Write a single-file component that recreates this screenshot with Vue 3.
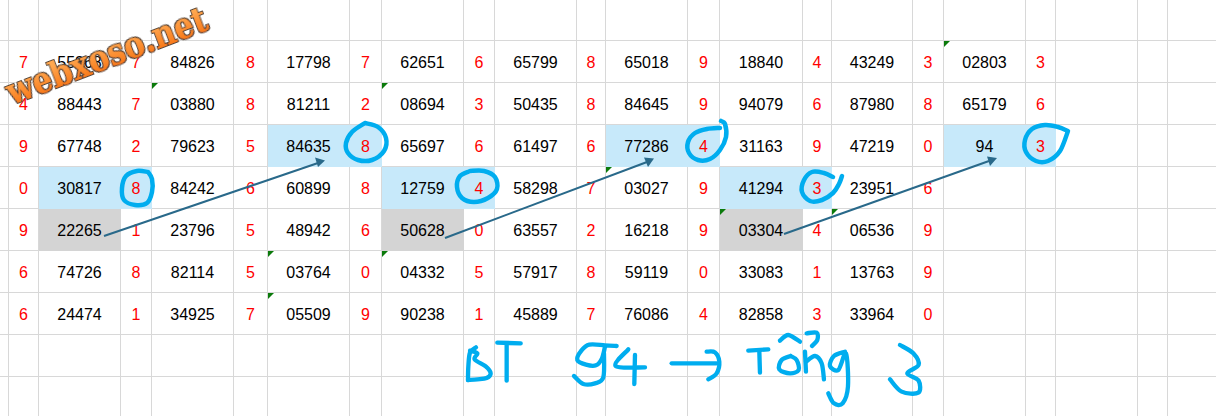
<script setup>
const widths = [9, 30, 82, 31, 82, 34, 82, 32, 82, 31, 82, 29, 82, 32, 83, 29, 81, 31, 82, 30, 82, 30]
const heights = [41, 42, 42, 42, 42, 42, 42, 42, 42, 42, 39]
const gridColumns = widths.map((w) => w + 'px').join(' ') + ' 1fr'
const gridRows = heights.map((h) => h + 'px').join(' ')

const data = [
  [],
  '7 55368 7 84826 8 17798 7 62651 6 65799 8 65018 9 18840 4 43249 3 02803 3'.split(' '),
  '4 88443 7 03880 8 81211 2 08694 3 50435 8 84645 9 94079 6 87980 8 65179 6'.split(' '),
  '9 67748 2 79623 5 84635 8 65697 6 61497 6 77286 4 31163 9 47219 0 94 3'.split(' '),
  '0 30817 8 84242 6 60899 8 12759 4 58298 7 03027 9 41294 3 23951 6'.split(' '),
  '9 22265 1 23796 5 48942 6 50628 0 63557 2 16218 9 03304 4 06536 9'.split(' '),
  '6 74726 8 82114 5 03764 0 04332 5 57917 8 59119 0 33083 1 13763 9'.split(' '),
  '6 24474 1 34925 7 05509 9 90238 1 45889 7 76086 4 82858 3 33964 0'.split(' '),
  [],
  [],
  [],
]

const fills = {
  '3-5': 'blue', '3-6': 'blue', '3-11': 'blue', '3-12': 'blue', '3-17': 'blue', '3-18': 'blue',
  '4-1': 'blue', '4-2': 'blue', '4-7': 'blue', '4-8': 'blue', '4-13': 'blue', '4-14': 'blue',
  '5-1': 'gray', '5-7': 'gray', '5-13': 'gray',
}

const cells = []
data.forEach((row, r) => {
  for (let c = -1; c < 22; c++) {
    const text = c >= 0 ? row[c] || '' : ''
    const isNum = c >= 0 && c % 2 === 1
    cells.push({
      key: r + ':' + c,
      text,
      cls: [
        isNum ? 'num' : 'digit',
        fills[r + '-' + c] || '',
        c === 21 ? 'last' : '',
        r === data.length - 1 ? 'bottom' : '',
        isNum && text.length === 5 && text[0] === '0' ? 'flag' : '',
      ],
    })
  }
})

// Catmull-Rom through the sampled pen points, for a hand-drawn line
function smooth(pts) {
  if (pts.length < 3) return 'M' + pts.map((p) => p.join(' ')).join(' L')
  let d = 'M' + pts[0].join(' ')
  for (let i = 0; i < pts.length - 1; i++) {
    const p0 = pts[i - 1] || pts[i]
    const p1 = pts[i]
    const p2 = pts[i + 1]
    const p3 = pts[i + 2] || p2
    const c1 = [p1[0] + (p2[0] - p0[0]) / 6, p1[1] + (p2[1] - p0[1]) / 6]
    const c2 = [p2[0] - (p3[0] - p1[0]) / 6, p2[1] - (p3[1] - p1[1]) / 6]
    d += ` C${c1[0]} ${c1[1]} ${c2[0]} ${c2[1]} ${p2[0]} ${p2[1]}`
  }
  return d
}

const marks = [
  [[148,172],[137,171],[126,176],[122,188],[124,200],[135,205],[147,203],[152,192],[152,179],[148,172]],
  [[365,123],[378,127],[386,138],[384,151],[372,160],[358,160],[348,153],[346,143],[352,132],[365,123]],
  [[470,171],[484,171],[495,177],[497,189],[488,198],[474,202],[462,198],[457,187],[460,176],[470,171]],
  [[720,128],[707,129],[695,133],[688,142],[689,153],[698,160],[710,159],[720,150],[726,137],[725,124],[721,121]],
  [[1068,131],[1058,127],[1045,125],[1032,129],[1025,140],[1026,152],[1036,161],[1048,161],[1060,151],[1068,131]],
  [[833,177],[824,173],[812,172],[804,180],[802,192],[810,201],[822,200],[833,193],[839,184],[842,176]],
].map(smooth)

const arrows = [
  { d: 'M104 236 L318 163', head: '325,160.5 315,157.5 318,167' },
  { d: 'M445 238 L647 162', head: '654,158.5 644,157.5 648,167' },
  { d: 'M784 234 L989 161', head: '997,158 987,156.5 990,166' },
]

const writing = [
  [[108,82],[90,98],[85,140],[84,180]],
  [[90,92],[112,100],[104,118],[138,140],[152,160],[140,174],[112,178],[84,180]],
  [[172,68],[242,70]],
  [[200,70],[200,182]],
  [[530,78],[495,76],[448,74],[424,92],[412,120],[438,134],[468,136],[486,115],[495,80]],
  [[492,100],[490,172],[465,190],[430,192],[402,168]],
  [[565,88],[527,138],[615,142]],
  [[585,105],[583,192]],
  [[695,130],[830,130]],
  [[800,95],[825,97],[838,125],[830,160],[805,178]],
  [[925,92],[985,88]],
  [[958,92],[960,158]],
  [[1020,62],[1045,45],[1080,65]],
  [[1052,108],[1025,120],[1018,148],[1050,160],[1076,150],[1070,120],[1052,108]],
  [[1095,95],[1098,155]],
  [[1098,125],[1125,108],[1145,130],[1152,178]],
  [[1100,40],[1130,38],[1132,60],[1116,78]],
  [[1215,95],[1182,108],[1170,138],[1195,150],[1218,100],[1224,200],[1208,250],[1182,250],[1165,220]],
  [[1380,75],[1420,100],[1436,135],[1402,160],[1436,182],[1435,218],[1385,215],[1350,178]],
].map(smooth)
</script>

<template>
  <div class="sheet">
    <div class="grid" :style="{ gridTemplateColumns: gridColumns, gridTemplateRows: gridRows }">
      <div v-for="cell in cells" :key="cell.key" class="cell" :class="cell.cls">{{ cell.text }}</div>
    </div>

    <svg class="ink" width="1216" height="416" viewBox="0 0 1216 416">
      <defs>
        <linearGradient id="orange" x1="0" y1="0" x2="0" y2="1">
          <stop offset="0.25" stop-color="#ffa850" />
          <stop offset="0.8" stop-color="#f87a1a" />
        </linearGradient>
        <filter id="fat" x="-5%" y="-20%" width="110%" height="140%">
          <feMorphology in="SourceGraphic" operator="dilate" radius="0.25" result="body" />
          <feMorphology in="SourceAlpha" operator="dilate" radius="1.1" result="spread" />
          <feFlood flood-color="#4f3f33" />
          <feComposite in2="spread" operator="in" result="edge" />
          <feMerge>
            <feMergeNode in="edge" />
            <feMergeNode in="body" />
          </feMerge>
        </filter>
      </defs>
      <g class="circle">
        <path v-for="d in marks" :key="d" :d="d" />
      </g>
      <g v-for="a in arrows" :key="a.d" class="arrow">
        <path :d="a.d" />
        <polygon :points="a.head" />
      </g>
      <g class="writing" transform="translate(440 320) scale(0.3333)">
        <path v-for="d in writing" :key="d" :d="d" />
      </g>
      <text class="mark" transform="translate(12 105) rotate(-21) scale(0.97 1.12)" fill="url(#orange)" filter="url(#fat)">webxoso.net</text>
    </svg>
  </div>
</template>

<style scoped>
.sheet {
  position: relative;
  width: 1216px;
  height: 416px;
  overflow: hidden;
  background: #fff;
  font-family: "Liberation Sans", Arial, sans-serif;
  font-size: 16px;
}
.grid {
  display: grid;
  width: 1216px;
  height: 416px;
}
.cell {
  position: relative;
  display: flex;
  align-items: center;
  justify-content: center;
  box-sizing: border-box;
  padding-top: 2px;
  border-right: 1px solid #d8d8d8;
  border-bottom: 1px solid #d8d8d8;
  color: #000;
}
.digit {
  color: #f00;
}
.last {
  border-right: 0;
}
.bottom {
  border-bottom: 0;
}
.blue {
  background: #c7e9fa;
  border-color: #c7e9fa;
}
.gray {
  background: #d4d4d4;
  border-color: #d4d4d4;
}
.flag::before {
  content: "";
  position: absolute;
  top: 0;
  left: 0;
  border-style: solid;
  border-width: 6px 6px 0 0;
  border-color: #0b7a0b transparent transparent transparent;
}
.ink {
  position: absolute;
  top: 0;
  left: 0;
}
.circle path,
.writing path {
  fill: none;
  stroke: #00adef;
  stroke-linecap: round;
  stroke-linejoin: round;
}
.circle path {
  stroke-width: 4.5;
}
.writing path {
  stroke-width: 13;
}
.arrow path {
  fill: none;
  stroke: #29698a;
  stroke-width: 2;
}
.arrow polygon {
  fill: #29698a;
}
.mark {
  font-family: "DejaVu Serif", serif;
  font-size: 32px;
  font-weight: 700;
}
</style>
